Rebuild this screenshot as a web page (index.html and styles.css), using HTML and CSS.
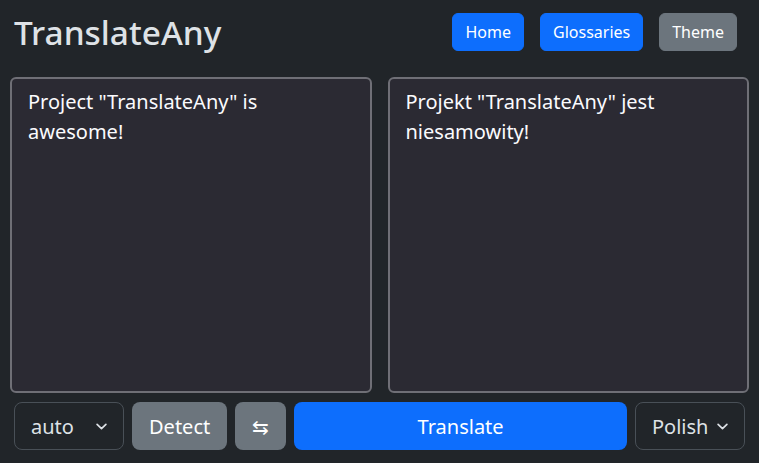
FILE: index.html
```html
<!DOCTYPE html>
<html lang="en">
<head>
<meta charset="utf-8">
<title>TranslateAny</title>
<link rel="stylesheet" href="styles.css">
</head>
<body>
<div class="page">
  <header class="header">
    <h1 class="title">TranslateAny</h1>
    <nav class="nav">
      <button class="btn btn-primary">Home</button>
      <button class="btn btn-primary">Glossaries</button>
      <button class="btn btn-secondary">Theme</button>
    </nav>
  </header>
  <main class="panes">
    <textarea class="pane">Project "TranslateAny" is awesome!</textarea>
    <textarea class="pane">Projekt "TranslateAny" jest niesamowity!</textarea>
  </main>
  <div class="controls">
    <div class="select">
      <span>auto</span>
      <svg class="chev" width="10" height="6" viewBox="0 0 10 6"><path d="M1 1l4 4 4-4" fill="none" stroke="#dee2e6" stroke-width="1.5" stroke-linecap="round" stroke-linejoin="round"/></svg>
    </div>
    <button class="btn-lg btn-secondary">Detect</button>
    <button class="btn-lg btn-secondary swap">⇆</button>
    <button class="btn-lg btn-primary grow">Translate</button>
    <div class="select">
      <span>Polish</span>
      <svg class="chev" width="10" height="6" viewBox="0 0 10 6"><path d="M1 1l4 4 4-4" fill="none" stroke="#dee2e6" stroke-width="1.5" stroke-linecap="round" stroke-linejoin="round"/></svg>
    </div>
  </div>
</div>
</body>
</html>
```

FILE: styles.css
```css
* { box-sizing: border-box; }
html, body {
  margin: 0;
  height: 100%;
  background: #212529;
  color: #dee2e6;
  font-family: "Noto Sans", "Open Sans", sans-serif;
}
.page {
  height: 463px;
  display: flex;
  flex-direction: column;
}
.header {
  display: flex;
  align-items: center;
  justify-content: space-between;
  padding: 13px 22px 0 14px;
  height: 51px;
}
.title {
  margin: 0;
  font-size: 33.4px;
  font-weight: 500;
  line-height: 38px;
  color: #dee2e6;
}
.nav {
  display: flex;
  gap: 16px;
}
.btn {
  height: 38px;
  padding: 0 12px;
  border: 1px solid transparent;
  border-radius: 6px;
  font-family: inherit;
  font-size: 16px;
  color: #fff;
}
.btn-primary { background: #0d6efd; border-color: #0d6efd; color: #fff; }
.btn-secondary { background: #6c757d; border-color: #6c757d; color: #fff; }
.panes {
  display: flex;
  gap: 16px;
  padding: 0 10px;
  margin-top: 26px;
  height: 316px;
}
.pane {
  flex: 1;
  min-width: 0;
  height: 316px;
  resize: none;
  background: #2b2a33;
  color: #fbfbfe;
  border: 2px solid #6f6f76;
  border-radius: 6px;
  padding: 8px 16px;
  font-family: inherit;
  font-size: 20px;
  line-height: 30px;
  outline: none;
}
.controls {
  display: flex;
  gap: 8px;
  padding: 0 14px;
  margin-top: 9px;
  height: 48px;
}
.select {
  width: 110px;
  height: 48px;
  display: flex;
  align-items: center;
  justify-content: space-between;
  padding: 0 16px 0 16px;
  border: 1px solid #495057;
  border-radius: 8px;
  font-size: 20px;
  color: #dee2e6;
}
.chev { display: block; width: 11px; height: 7px; }
.btn-lg {
  height: 48px;
  padding: 0 16px;
  border: 1px solid transparent;
  border-radius: 8px;
  font-family: inherit;
  font-size: 20px;
  color: #fff;
}
.swap { width: 51px; padding: 0; }
.grow { flex: 1; }
```
